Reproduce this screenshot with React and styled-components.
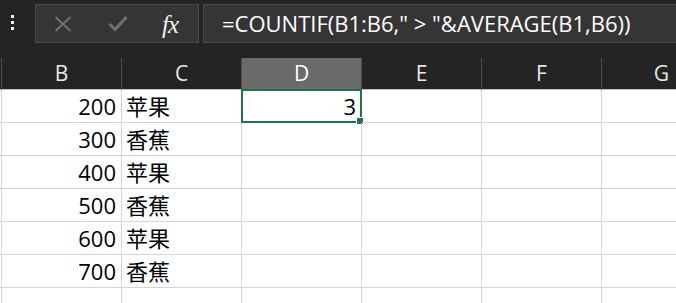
import React from "react";
import styled, { createGlobalStyle } from "styled-components";

const GlobalStyle = createGlobalStyle`
  html, body {
    margin: 0;
    padding: 0;
    background: #ffffff;
  }
  body {
    font-family: "Open Sans", "Noto Sans CJK SC", sans-serif;
  }
`;

const Wrapper = styled.div`
  width: 676px;
  height: 303px;
  overflow: hidden;
  background: #ffffff;
`;

const FormulaBar = styled.div`
  display: flex;
  align-items: flex-start;
  height: 58px;
  padding-top: 4px;
  box-sizing: border-box;
  background: #242424;
`;

const Dots = styled.div`
  width: 35px;
  display: flex;
  flex-direction: column;
  align-items: center;
  gap: 3px;
  padding-top: 11px;
  box-sizing: border-box;
  padding-right: 11px;
  span {
    width: 3px;
    height: 3px;
    background: #f0f0f0;
  }
`;

const IconBox = styled.div`
  width: 164px;
  height: 39px;
  box-sizing: border-box;
  background: #353535;
  border: 1px solid #4a4a4a;
  display: flex;
  align-items: center;
`;

const IconSlot = styled.div`
  width: ${(p) => p.w}px;
  display: flex;
  justify-content: center;
  align-items: center;
`;

const Fx = styled.span`
  font-family: "Liberation Serif", serif;
  font-style: italic;
  font-size: 25px;
  line-height: 1;
  margin-top: 2px;
  color: #f2f2f2;
  letter-spacing: -1px;
`;

const FormulaInput = styled.div`
  flex: 1;
  height: 39px;
  margin-left: 4px;
  box-sizing: border-box;
  background: #353535;
  border: 1px solid #4a4a4a;
  border-right: none;
  color: #ffffff;
  font-size: 22px;
  line-height: 37px;
  padding-left: 18px;
  white-space: pre;
`;

const Grid = styled.div`
  display: grid;
  grid-template-columns: 2px repeat(5, 120px) 120px;
`;

const HeadCell = styled.div`
  height: 32px;
  box-sizing: border-box;
  background: ${(p) => (p.selected ? "#6a6a6a" : "#242424")};
  border-right: 1px solid #4d4d4d;
  border-bottom: 1px solid #c4c4c4;
  color: ${(p) => (p.selected ? "#ffffff" : "#e8e8e8")};
  font-size: 21px;
  line-height: 31px;
  text-align: center;
`;

const Cell = styled.div`
  position: relative;
  height: 33px;
  box-sizing: border-box;
  border-right: 1px solid #d4d4d4;
  border-bottom: 1px solid #d4d4d4;
  color: #000000;
  font-size: 22px;
  line-height: 32px;
  text-align: ${(p) => (p.num ? "right" : "left")};
  padding: 0 5px 0 4px;
  white-space: nowrap;
`;

const Selection = styled.div`
  position: absolute;
  left: -1px;
  top: -1px;
  right: -1px;
  bottom: -1px;
  border: 2px solid #217346;
  pointer-events: none;
  &::after {
    content: "";
    position: absolute;
    right: -4px;
    bottom: -4px;
    width: 6px;
    height: 6px;
    background: #217346;
    border: 1px solid #ffffff;
  }
`;

const CrossIcon = () => (
  <svg width="18" height="16" viewBox="0 0 18 16">
    <path d="M1.5 1 L16.5 15 M16.5 1 L1.5 15" stroke="#6f6f6f" strokeWidth="2.2" />
  </svg>
);

const CheckIcon = () => (
  <svg width="20" height="17" viewBox="0 0 20 17">
    <path d="M1.5 9 L7 14.5 L18.5 2" stroke="#6f6f6f" strokeWidth="3" fill="none" />
  </svg>
);

const columns = ["B", "C", "D", "E", "F", "G"];
const rows = [
  [200, "苹果"],
  [300, "香蕉"],
  [400, "苹果"],
  [500, "香蕉"],
  [600, "苹果"],
  [700, "香蕉"],
  ["", ""],
];

export default function App() {
  return (
    <Wrapper>
      <GlobalStyle />
      <FormulaBar>
        <Dots>
          <span />
          <span />
          <span />
        </Dots>
        <IconBox>
          <IconSlot w={54}>
            <CrossIcon />
          </IconSlot>
          <IconSlot w={55}>
            <CheckIcon />
          </IconSlot>
          <IconSlot w={50}>
            <Fx>fx</Fx>
          </IconSlot>
        </IconBox>
        <FormulaInput>=COUNTIF(B1:B6," &gt; "&amp;AVERAGE(B1,B6))</FormulaInput>
      </FormulaBar>
      <Grid>
        <HeadCell />
        {columns.map((c) => (
          <HeadCell key={c} selected={c === "D"}>
            {c}
          </HeadCell>
        ))}
        {rows.map((r, i) => (
          <React.Fragment key={i}>
            <Cell style={{ padding: 0 }} />
            <Cell num>{r[0]}</Cell>
            <Cell>{r[1]}</Cell>
            <Cell num>
              {i === 0 ? "3" : ""}
              {i === 0 && <Selection />}
            </Cell>
            <Cell />
            <Cell />
            <Cell />
          </React.Fragment>
        ))}
      </Grid>
    </Wrapper>
  );
}
